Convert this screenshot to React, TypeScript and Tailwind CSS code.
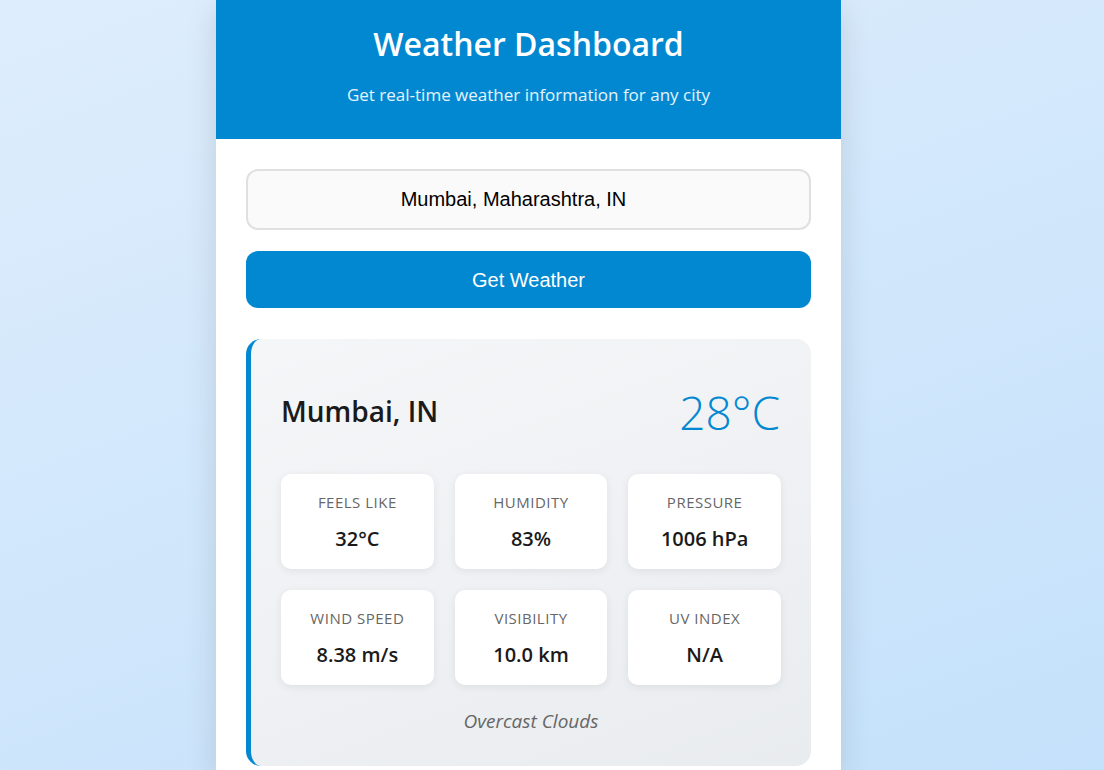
import { useState } from "react";

const stats = [
  { label: "Feels Like", value: "32°C" },
  { label: "Humidity", value: "83%" },
  { label: "Pressure", value: "1006 hPa" },
  { label: "Wind Speed", value: "8.38 m/s" },
  { label: "Visibility", value: "10.0 km" },
  { label: "UV Index", value: "N/A" },
];

const App: React.FC = () => {
  const [city, setCity] = useState("Mumbai, Maharashtra, IN");

  return (
    <div className="min-h-screen w-full bg-[linear-gradient(160deg,#deedfc_0%,#c4e1fb_100%)] flex justify-center pr-[47px] font-['Open_Sans',sans-serif]">
      <div className="w-[625px] bg-white shadow-[0_10px_30px_rgba(0,0,0,0.12)]">
        {/* Header */}
        <header className="h-[139px] bg-[#0288d1] text-white flex flex-col items-center pt-[22px]">
          <h1 className="text-[32px] leading-[44px] font-semibold">Weather Dashboard</h1>
          <p className="mt-[17px] text-[17px] leading-[24px] text-white/90">
            Get real-time weather information for any city
          </p>
        </header>

        <div className="px-[30px] pt-[30px]">
          {/* Search */}
          <input
            value={city}
            onChange={(e) => setCity(e.target.value)}
            className="w-full h-[61px] rounded-[12px] border-2 border-[#e0e0e0] bg-[#fafafa] pl-[15px] pr-[45px] text-center text-[20px] text-black font-['Liberation_Sans',Arial,sans-serif] outline-none"
          />
          <button className="mt-[21px] w-full h-[57px] rounded-[12px] bg-[#0288d1] text-white text-[20px] font-['Liberation_Sans',Arial,sans-serif]">
            Get Weather
          </button>

          {/* Weather card */}
          <div className="mt-[31px] rounded-[15px] border-l-[5px] border-[#0288d1] bg-[linear-gradient(160deg,#f5f6f8_0%,#e9ecef_100%)] pl-[30px] pr-[30px] pt-[30px] pb-[32px]">
            <div className="h-[75px] mb-[30px] flex items-center justify-between">
              <h2 className="text-[28px] font-semibold text-[#1a1a1a] pt-[8px]">Mumbai, IN</h2>
              <div className="text-[46px] font-light text-[#0288d1] leading-none pt-[10px] pr-[1px]">28°C</div>
            </div>

            <div className="grid grid-cols-3 gap-x-[21px] gap-y-[21px]">
              {stats.map((s) => (
                <div
                  key={s.label}
                  className="h-[95px] rounded-[10px] bg-white shadow-[0_2px_8px_rgba(0,0,0,0.07)] flex flex-col items-center pt-[18px]"
                >
                  <div className="text-[15px] leading-[20px] uppercase tracking-[0.5px] text-[#666]">
                    {s.label}
                  </div>
                  <div className="mt-[14px] text-[20px] leading-[26px] font-semibold text-[#1a1a1a]">
                    {s.value}
                  </div>
                </div>
              ))}
            </div>

            <p className="mt-[23px] text-center text-[19px] leading-[26px] italic text-[#666]">
              Overcast Clouds
            </p>
          </div>
        </div>
      </div>
    </div>
  );
};

export default App;
